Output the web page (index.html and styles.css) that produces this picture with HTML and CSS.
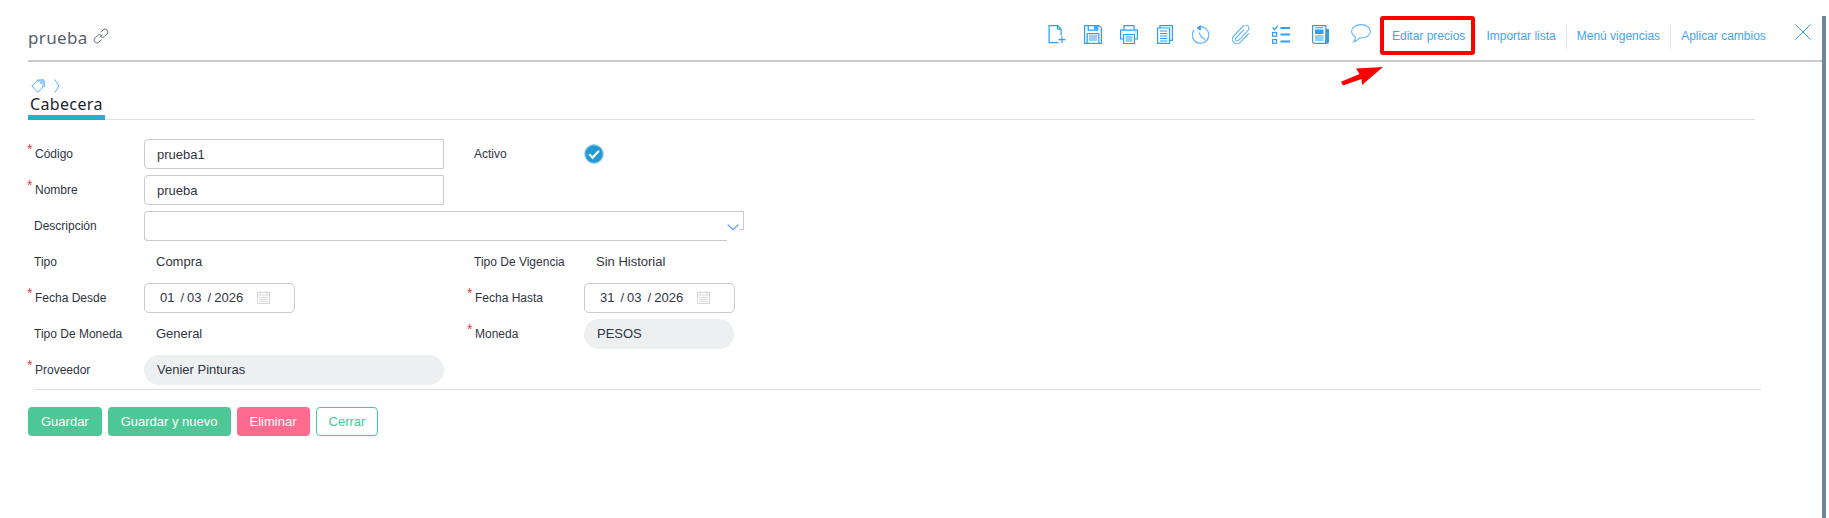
FILE: index.html
```html
<!DOCTYPE html>
<html lang="es">
<head>
<meta charset="utf-8">
<title>prueba</title>
<link rel="stylesheet" href="styles.css">
</head>
<body>
<div class="page">
  <header class="topbar">
    <div class="title">
      <span class="title-text">prueba</span>
      <svg class="link-icon" viewBox="0 0 16 16" fill="none" stroke="#6b7280" stroke-width="1"><path d="M6.600 9.400 9.400 6.600"/><path d="M7.500 4.400 10 1.900a2.900 2.900 0 0 1 4.100 4.100l-2.500 2.500a2.900 2.900 0 0 1-3.800.3"/><path d="M8.500 11.600 6 14.100a2.900 2.900 0 0 1-4.100-4.100l2.500-2.500a2.900 2.900 0 0 1 3.800-.3"/></svg>
    </div>
    <nav class="toolbar">
      <svg class="ico ico-file" viewBox="0 0 18 20" fill="none" stroke="currentColor" stroke-width="1.300"><path d="M10.500 18.500H.7V.7h9l3.600 3.600V11"/><path d="M9.700.7v3.600h3.600"/><path d="M10.500 15.500H18M14.200 12v7"/></svg>
      <svg class="ico ico-save" viewBox="0 0 18 19" fill="none" stroke="currentColor" stroke-width="1.200"><path d="M.6.600h14.200l2.600 2.600v15.200H.6z"/><path d="M4.200.6v4.600h9.600V.6"/><rect x="10.600" y="1.800" width="1.800" height="2"/><path d="M3.200 18.400V8.600h11.600v9.800"/><path d="M5 11h8M5 13h8M5 15h8"/></svg>
      <svg class="ico ico-print" viewBox="0 0 18 19" fill="none" stroke="currentColor" stroke-width="1.200"><path d="M4 5V.6h10V5"/><path d="M3.600 14H.6V5.200h16.800V14h-3"/><path d="M3.600 9.500h10.800v9H3.600z"/><path d="M5.600 12h6.800M5.600 14h6.800M5.600 16h6.800"/><path d="M14.600 7h1"/></svg>
      <svg class="ico ico-copy" viewBox="0 0 16 19" fill="none" stroke="currentColor" stroke-width="1.200"><path d="M3 3V.6h12.400v14.800H12.600"/><path d="M.6 3h12v15.400H.6z"/><path d="M3 6h7.400M3 8.500h7.400M3 11h7.400M3 13.500h7.400M3 16h7.400"/></svg>
      <svg class="ico ico-history" viewBox="0 0 18 19" fill="none" stroke="#62b6f7" stroke-width="1.200"><path d="M8 1.700A8.300 8.300 0 1 1 1.900 5"/><path d="M7 7.500 9.500 12l3.500 2.500"/><path d="M4.600 3 8.800 0v5.800z" fill="#2b9ff5" stroke="none"/></svg>
      <svg class="ico ico-clip" viewBox="0 0 18 19" fill="none" stroke="#62b6f7" stroke-width="1.100"><path d="M12 4.600 4 12.800a1.800 1.800 0 0 0 2.600 2.500l9.300-9.700a3.300 3.300 0 0 0-4.800-4.600L1.700 11a4.500 4.500 0 0 0 6.500 6.400l8.600-8.900"/></svg>
      <svg class="ico ico-list" viewBox="0 0 18 19" fill="none" stroke="currentColor" stroke-width="1.200"><path d="M.6 2.500l2 2L6 .6"/><rect x=".6" y="7.600" width="4" height="3.600"/><rect x=".6" y="14.600" width="4" height="3.600"/><path d="M8.500 3h9.500M8.500 9.400h9.500M8.500 16.400h9.500" stroke-width="2"/></svg>
      <svg class="ico ico-news" viewBox="0 0 17 19" fill="none" stroke="currentColor" stroke-width="1.200"><path d="M.6.600h13.300v17.800H2.400a1.800 1.800 0 0 1-1.800-1.800z"/><rect x="3" y="4.500" width="8.500" height="4.500" fill="currentColor" stroke="none"/><path d="M3 2.800h8.500M3 11h8.500M3 13h8.500M3 15h8.500" stroke-width="1"/><path d="M14 4h3v13a1.800 1.800 0 0 1-1.800 1.800H13z" fill="currentColor" stroke="none"/></svg>
      <svg class="ico ico-chat" viewBox="0 0 20 19" fill="none" stroke="#62b6f7" stroke-width="1.100"><path d="M10.300.6C5 .6.600 3.500.6 7.300c0 2.400 1.600 4.400 4 5.600-.2 1.700-.9 3.300-2 4.900 2.400-.6 4.500-2 6.100-3.900.5.100 1 .1 1.600.1 5.200 0 9.100-3 9.100-6.700S15.500.6 10.300.6z"/></svg>
      <div class="links">
        <a class="link">Editar precios</a>
        <a class="link">Importar lista</a>
        <a class="link">Menú vigencias</a>
        <a class="link">Aplicar cambios</a>
      </div>
      <svg class="close" viewBox="0 0 16 16" fill="none" stroke="#2b9ff5" stroke-width="1"><path d="M.5.500l15 15M15.500.500l-15 15"/></svg>
    </nav>
  </header>

  <div class="mark-box"></div>
  <svg class="mark-arrow" viewBox="0 0 42 19"><path d="M42 0 15 1.500 18.500 7 0 14.700 2 18.500 20.500 12 21 18z" fill="#ff0000"/></svg>

  <main class="content">
    <div class="crumbs">
      <svg class="tag" viewBox="0 0 14 14" fill="none" stroke="#5cb3f6" stroke-width="1"><path d="M.8 7 6 1.800h6V8l-5.200 5.300z"/><path d="M5.500 1.200 12.500.7l.8 1.300V8"/><circle cx="10" cy="3.800" r=".7"/></svg>
      <svg class="chev" viewBox="0 0 6 14" fill="none" stroke="#5cb3f6" stroke-width="1"><path d="M.8.500 5 7 .8 13.500"/></svg>
    </div>
    <div class="tabs"><span class="tab">Cabecera</span></div>

    <form class="form">
      <label class="lab req">Código</label>
      <input class="inp" type="text" value="prueba1">
      <label class="lab">Activo</label>
      <div class="ctrl">
        <svg class="check" viewBox="0 0 20 20"><circle cx="10" cy="10" r="9.300" fill="#229ad6" stroke="#a3d0ea" stroke-width="1.200"/><path d="M5.200 10.300 8.700 13.600 15 6.800" fill="none" stroke="#fff" stroke-width="2.200"/></svg>
      </div>

      <label class="lab req">Nombre</label>
      <input class="inp" type="text" value="prueba">
      <span></span><span></span>

      <label class="lab">Descripción</label>
      <div class="desc">
        <svg class="desc-chev" viewBox="0 0 12 7" fill="none" stroke="#5b9bf0" stroke-width="1.200"><path d="M.7.700 6 5.700 11.300.700"/></svg>
      </div>

      <label class="lab">Tipo</label>
      <span class="val">Compra</span>
      <label class="lab">Tipo De Vigencia</label>
      <span class="val">Sin Historial</span>

      <label class="lab req">Fecha Desde</label>
      <div class="date">
        <span class="d-a">01</span><span class="d-s">/</span><span class="d-b">03</span><span class="d-s">/</span><span class="d-c">2026</span>
        <svg class="cal" viewBox="0 0 13 13" fill="none" stroke="#d5d7db" stroke-width="1"><rect x=".5" y="1.500" width="12" height="11"/><path d="M3 0v3M10 0v3M.5 4h12M2 6.500h9M2 8.500h9M2 10.500h9"/></svg>
      </div>
      <label class="lab req">Fecha Hasta</label>
      <div class="date">
        <span class="d-a">31</span><span class="d-s">/</span><span class="d-b">03</span><span class="d-s">/</span><span class="d-c">2026</span>
        <svg class="cal" viewBox="0 0 13 13" fill="none" stroke="#d5d7db" stroke-width="1"><rect x=".5" y="1.500" width="12" height="11"/><path d="M3 0v3M10 0v3M.5 4h12M2 6.500h9M2 8.500h9M2 10.500h9"/></svg>
      </div>

      <label class="lab">Tipo De Moneda</label>
      <span class="val">General</span>
      <label class="lab req">Moneda</label>
      <div class="pill pill-sm">PESOS</div>

      <label class="lab req">Proveedor</label>
      <div class="pill">Venier Pinturas</div>
      <span></span><span></span>
    </form>

    <hr class="rule">

    <div class="actions">
      <button class="btn btn-green" type="button">Guardar</button>
      <button class="btn btn-green" type="button">Guardar y nuevo</button>
      <button class="btn btn-pink" type="button">Eliminar</button>
      <button class="btn btn-line" type="button">Cerrar</button>
    </div>
  </main>
</div>
</body>
</html>
```

FILE: styles.css
```css
* { box-sizing: border-box; }
html, body { margin: 0; padding: 0; background: #fff; }
body { font-family: "Liberation Sans", Arial, sans-serif; color: #2f3542; overflow: hidden; }

.page {
  position: relative;
  width: 1826px;
  height: 518px;
  padding-left: 28px;
}
.page::after {
  content: "";
  position: absolute;
  right: 0;
  top: 16px;
  bottom: 0;
  width: 4px;
  background: #6e869e;
}

.topbar {
  display: flex;
  align-items: flex-start;
  justify-content: space-between;
  height: 62px;
  border-bottom: 2px solid #c9c9d1;
}
.title { display: flex; align-items: center; margin-top: 26px; height: 22px; }
.title-text { font-family: "Noto Sans", sans-serif; font-size: 17px; letter-spacing: .35px; color: #575e6c; }
.link-icon { width: 16px; height: 16px; margin-left: 5px; margin-top: -3px; }

.toolbar { display: flex; align-items: flex-start; color: #2b9ff5; width: 778px; padding-top: 25px; position: relative; }
.ico { display: block; flex: none; height: 19px; }
.ico-file { width: 18px; }
.ico-save { width: 18px; margin-left: 18px; }
.ico-print { width: 18px; margin-left: 18px; }
.ico-copy { width: 16px; margin-left: 19px; }
.ico-history { width: 18px; margin-left: 19px; }
.ico-clip { width: 18px; margin-left: 22px; }
.ico-list { width: 18px; margin-left: 22px; }
.ico-news { width: 17px; margin-left: 22px; }
.ico-chat { width: 20px; margin-left: 22px; margin-top: -1px; }

.links { display: flex; margin-left: 10px; margin-top: -1px; }
.link {
  font-size: 12px;
  line-height: 25px;
  color: #3ea6f5;
  padding: 0 10px;
  border-right: 1px solid #e4e6e8;
  white-space: nowrap;
}
.link:first-child { padding-left: 11px; }
.link:last-child { border-right: 0; }
.close { position: absolute; right: 15px; top: 24px; width: 16px; height: 16px; }

.mark-box {
  position: absolute;
  left: 1380px;
  top: 16px;
  width: 95px;
  height: 39px;
  border: 4px solid #ff0000;
  border-radius: 3px;
}
.mark-arrow { position: absolute; left: 1341px; top: 67px; width: 42px; height: 19px; }

.content { width: 1733px; }
.crumbs { display: flex; align-items: center; gap: 9px; height: 16px; margin-top: 16px; padding-left: 3px; }
.tag { width: 14px; height: 14px; }
.chev { width: 6px; height: 14px; }
.tabs { width: 1727px; height: 26px; border-bottom: 1px solid #dddfe2; display: flex; }
.tab {
  width: 77px;
  height: 26px;
  padding-left: 2px;
  font-family: "Noto Sans", sans-serif;
  font-size: 16px;
  line-height: 21px;
  letter-spacing: .35px;
  color: #22262e;
  border-bottom: 5px solid #1fb0d6;
  white-space: nowrap;
}

.form {
  display: grid;
  grid-template-columns: 116px 324px 116px 150px;
  grid-auto-rows: 30px;
  row-gap: 6px;
  margin-top: 19px;
  align-items: center;
}
.lab { position: relative; font-size: 12px; padding-left: 6px; color: #2f3542; white-space: nowrap; }
.lab.req { padding-left: 7px; }
.lab.req::before {
  content: "*";
  position: absolute;
  left: -1px;
  top: -5px;
  color: #f0353f;
  font-size: 14px;
  line-height: 14px;
}
.inp {
  display: block;
  width: 300px;
  height: 30px;
  padding: 0 12px;
  border: 1px solid #c9cbce;
  border-radius: 4px 0 0 4px;
  font: 13px "Liberation Sans", Arial, sans-serif;
  color: #2f3542;
  outline: 0;
}
.ctrl { display: flex; align-items: center; }
.check { width: 20px; height: 20px; }
.val { font-size: 13px; line-height: 15px; padding-left: 12px; padding-bottom: 2px; color: #2f3542; }

.desc {
  grid-column: 2 / 5;
  position: relative;
  width: 600px;
  height: 30px;
  border-top: 1px solid #c9cbce;
  border-left: 1px solid #c9cbce;
  border-top-left-radius: 4px;
  border-bottom-left-radius: 4px;
}
.desc::before {
  content: "";
  position: absolute;
  left: -1px;
  bottom: 0;
  width: 582px;
  height: 5px;
  border-bottom: 1px solid #c9cbce;
  border-left: 1px solid #c9cbce;
  border-bottom-left-radius: 4px;
}
.desc::after {
  content: "";
  position: absolute;
  right: 0;
  top: 0;
  width: 4px;
  height: 17px;
  border-right: 1px solid #c9cbce;
  border-bottom: 1px solid #c9cbce;
}
.desc-chev { position: absolute; left: 582px; top: 12px; width: 12px; height: 7px; }

.date {
  position: relative;
  display: flex;
  align-items: center;
  width: 151px;
  height: 30px;
  padding-left: 15px;
  padding-bottom: 1px;
  border: 1px solid #c9cbce;
  border-radius: 5px;
  font-size: 13px;
  color: #2f3542;
}
.d-s { margin: 0 3px 0 6px; }
.cal { margin-left: 14px; width: 13px; height: 13px; }

.pill {
  width: 300px;
  height: 30px;
  line-height: 30px;
  padding-left: 13px;
  border-radius: 15px;
  background: #eeeff1;
  font-size: 13px;
  color: #2f3542;
}
.pill-sm { width: 150px; }

.rule {
  width: 1727px;
  height: 1px;
  margin: 4px 0 0 6px;
  border: 0;
  background: #dddfe2;
}

.actions { display: flex; gap: 6px; margin-top: 17px; }
.btn {
  height: 29px;
  padding: 0 12px;
  border: 1px solid transparent;
  border-radius: 4px;
  font: 13px "Liberation Sans", Arial, sans-serif;
  color: #fff;
}
.btn-green { background: #4cc795; }
.btn-pink { background: #ff6b8f; }
.btn-line { background: #fff; border-color: #4cc795; color: #4cc795; }
```
